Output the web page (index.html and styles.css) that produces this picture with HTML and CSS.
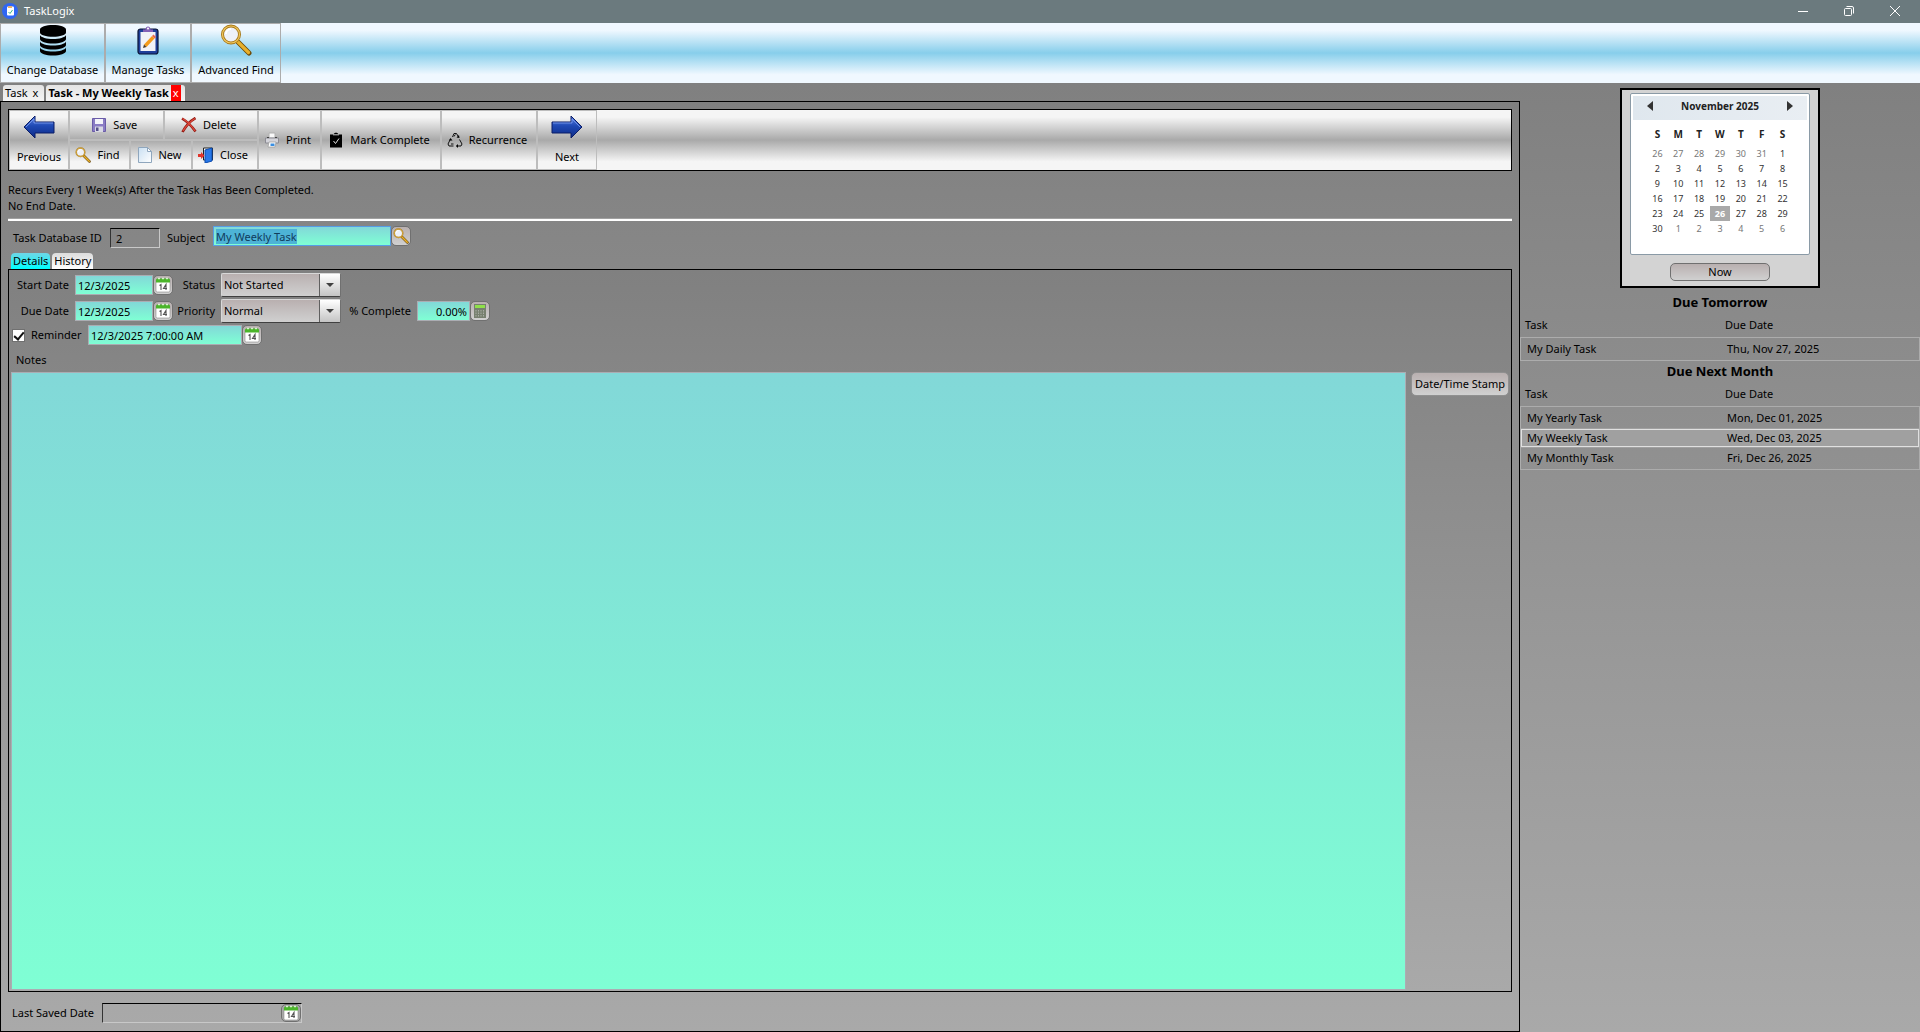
FILE: index.html
```html
<!DOCTYPE html>
<html lang="en">
<head>
<meta charset="utf-8">
<title>TaskLogix</title>
<link rel="stylesheet" href="styles.css">
</head>
<body>
<svg class="defs" aria-hidden="true">
  <defs>
    <linearGradient id="g-blue" x1="0" y1="0" x2="0" y2="1"><stop offset="0" stop-color="#5b82e6"/><stop offset=".45" stop-color="#1f49b4"/><stop offset="1" stop-color="#0d2a86"/></linearGradient>
    <linearGradient id="g-page" x1="0" y1="0" x2="1" y2="1"><stop offset="0" stop-color="#c9dff2"/><stop offset="1" stop-color="#ffffff"/></linearGradient>
    <symbol id="i-search" viewBox="0 0 32 32">
      <path d="M18 18l11 11" stroke="#6d4a08" stroke-width="5" stroke-linecap="round"/>
      <path d="M17 17l11.500 11.500" stroke="#e8b02c" stroke-width="3.200" stroke-linecap="round"/>
      <circle cx="11" cy="10.500" r="8.500" fill="#eef1f8" stroke="#a87818" stroke-width="3"/>
      <circle cx="11" cy="10.500" r="8.500" fill="none" stroke="#f0c860" stroke-width="1.200"/>
      <path d="M6 10a5 5 0 0 1 5-5" stroke="#fff" stroke-width="2" fill="none"/>
    </symbol>
    <symbol id="i-calendar" viewBox="0 0 16 16">
      <rect x="1" y="2" width="14" height="13" rx="1.500" fill="#fff" stroke="#8a8a8a" stroke-width=".6"/>
      <path d="M1 5.500V3a1.500 1.500 0 0 1 1.500-1.500h11A1.500 1.500 0 0 1 15 3v2.500z" fill="#4bb52a"/>
      <path d="M3 1.500h2M7 1.500h2M11 1.500h2" stroke="#d9f2cf" stroke-width="1.500"/>
      <path d="M4.500 8.500L6 7.500V13M11 13V7.500L8.500 11.500H12" stroke="#555" stroke-width="1.100" fill="none"/>
    </symbol>
  </defs>
</svg>

<header class="titlebar">
  <svg class="app-icon" viewBox="0 0 16 16"><circle cx="8" cy="8" r="8" fill="#2f66f2"/><rect x="5" y="3.500" width="7" height="9" rx="1" fill="#fff"/><path d="M6 3h4v2H6z" fill="#e8b070"/><path d="M6.500 9l1.500 1.500L10.500 7" stroke="#35b58a" fill="none"/></svg>
  <h1 class="app-name">TaskLogix</h1>
  <div class="window-buttons">
    <button class="window-button" aria-label="Minimize"><svg viewBox="0 0 10 10"><path d="M0 5.500h10"/></svg></button>
    <button class="window-button" aria-label="Restore"><svg viewBox="0 0 10 10"><rect x=".5" y="2.500" width="7" height="7" rx="1"/><path d="M2.500.5H8A1.500 1.500 0 0 1 9.500 2v5.500"/></svg></button>
    <button class="window-button" aria-label="Close"><svg viewBox="0 0 10 10"><path d="M0 0l10 10M10 0L0 10"/></svg></button>
  </div>
</header>

<nav class="ribbon" aria-label="Main">
  <button class="ribbon-button w-db">
    <svg class="icon-32" viewBox="0 0 32 32"><path d="M3 5.500C3 3 9 1 16 1s13 2 13 4.500v3C29 11 23 12.800 16 12.800S3 11 3 8.500zM3 11c1 2.500 6.500 4 13 4s12-1.500 13-4v4c0 2.500-6 4.500-13 4.500S3 17.500 3 15zM3 17.500c1 2.500 6.500 4 13 4s12-1.500 13-4v3.500c0 2.500-6 4.500-13 4.500S3 23.500 3 21zM3 23.500c1 2.500 6.500 4 13 4s12-1.500 13-4V27c0 2.500-6 4.500-13 4.500S3 29.500 3 27z"/></svg>
    <span>Change Database</span>
  </button>
  <button class="ribbon-button w-tasks">
    <svg class="icon-32" viewBox="0 0 32 32"><rect x="6" y="5" width="20" height="25" rx="2.500" fill="#1f3f9a" stroke="#0a1436" stroke-width="1.200"/><rect x="8.500" y="8" width="15" height="19" fill="#f2f2f7"/><path d="M11 8V5.500h2.500C13.500 1.500 18.500 1.500 18.500 5.500H21V8z" fill="#8561b5"/><circle cx="16" cy="4.600" r="1" fill="#fff"/><path d="M12 20.500l8-8.500 2.500 2.500-8 8.500z" fill="#f49a1a"/><path d="M12 20.500L11 24l3.500-1z" fill="#4a3a28"/><path d="M20 12l1.500-1.500 2.500 2.500-1.500 1.500z" fill="#e86a50"/></svg>
    <span>Manage Tasks</span>
  </button>
  <button class="ribbon-button w-find">
    <svg class="icon-32"><use href="#i-search"/></svg>
    <span>Advanced Find</span>
  </button>
</nav>

<div class="workspace">
  <main class="document">
    <div class="doc-tabs">
      <div class="doc-tab"><button class="tab-label">Task</button><button class="tab-close" aria-label="Close Task">x</button></div>
      <div class="doc-tab doc-tab-active"><button class="tab-label">Task - My Weekly Task</button><button class="tab-close" aria-label="Close My Weekly Task">x</button></div>
    </div>

    <section class="doc-body">
      <div class="toolbar">
        <button class="tool tool-tall w-prev">
          <svg class="arrow" viewBox="0 0 32 24"><path d="M1 12L12 1v6h19v11H12v5z" fill="url(#g-blue)" stroke="#0a1c66"/><path d="M3 12l8-8v4h19" fill="none" stroke="#7fa0f0" stroke-width=".8"/></svg>
          <span>Previous</span>
        </button>
        <div class="tool-stack">
          <div class="tool-row">
            <button class="tool tool-half"><svg class="icon-16" viewBox="0 0 16 16"><path d="M1.500 1.500h13v13h-13z" fill="#8a7cc4" stroke="#6a5ca8"/><path d="M4 2h8v5H4z" fill="#f4f4fa"/><path d="M4 9.500h8V15H4z" fill="#d8d8e4"/><path d="M5 10.500h2.500V14H5z" fill="#55508a"/></svg>Save</button>
            <button class="tool tool-half"><svg class="icon-16" viewBox="0 0 16 16"><path d="M1 1.500c5 3 10 8 13.500 13M14.500 1C9 4 4.500 9.500 1.500 15" stroke="#8e1a12" stroke-width="2.600" fill="none"/><path d="M1.500 1.500c5 3 9 7 12.500 12.500M14 1.500C9 4.500 5 9 2 14" stroke="#e0483c" stroke-width="1.300" fill="none"/></svg>Delete</button>
          </div>
          <div class="tool-row">
            <button class="tool w-find-small"><svg class="icon-16"><use href="#i-search"/></svg>Find</button>
            <button class="tool w-new"><svg class="icon-16" viewBox="0 0 16 16"><path d="M1.500.5h9l4 4v11h-13z" fill="url(#g-page)" stroke="#8fa6bd"/><path d="M10.500.5v4h4z" fill="#fff" stroke="#8fa6bd"/></svg>New</button>
            <button class="tool w-close"><svg class="icon-16" viewBox="0 0 16 16"><path d="M5.500 1h9v12h-9z" fill="#fff" stroke="#222"/><path d="M7 3l7-2v13l-7 2z" fill="#2878e8" stroke="#0d4cb0"/><path d="M0 7h3V5l3.500 3.500L3 12v-2H0z" fill="#e0342c"/></svg>Close</button>
          </div>
        </div>
        <button class="tool w-print"><svg class="icon-16" viewBox="0 0 16 16"><path d="M5 1h6v5H5z" fill="#fafafa" stroke="#b0b0b0"/><path d="M1.500 6h13v5h-13z" fill="#d4d4da" stroke="#8c8c94"/><path d="M3 5.500h2M11 5.500h2" stroke="#444"/><path d="M5 10h7l-1 5H4z" fill="#fff" stroke="#999" stroke-width=".7"/><path d="M6.500 11.500h4v2.500h-4z" fill="#3a8ee0"/></svg>Print</button>
        <button class="tool w-mark"><svg class="icon-16" viewBox="0 0 16 16"><path d="M2 2.500h3.500C6 0 10 0 10.500 2.500H14V15.500H2z"/><path d="M5 2.800h6" stroke="#ccc"/><path d="M5.500 9l2 2.500 3.500-5" stroke="#ddd" fill="none"/></svg>Mark Complete</button>
        <button class="tool w-recur"><svg class="icon-16" viewBox="0 0 16 16"><path d="M5.500 5L7 1.500h2.500L11.500 5M12.500 7.500L15 12l-1 2H9.500M6.500 14H2l-1-2 2.500-5M4 12h2.500M7 4.500L8.300 2.500" fill="none" stroke="#111" stroke-width="1"/><path d="M12.500 6l-3-.5L12 3zM9 14l2-2v4zM3.500 6l2 2.500H2z"/></svg>Recurrence</button>
        <button class="tool tool-tall w-next">
          <svg class="arrow" viewBox="0 0 32 24"><path d="M31 12L20 1v6H1v11h19v5z" fill="url(#g-blue)" stroke="#0a1c66"/><path d="M2 8h19V4l8 8" fill="none" stroke="#7fa0f0" stroke-width=".8"/></svg>
          <span>Next</span>
        </button>
      </div>

      <div class="recurrence-text"><p>Recurs Every 1 Week(s) After the Task Has Been Completed.</p><p>No End Date.</p></div>
      <hr class="rule">

      <form class="form">
        <div class="head-row">
          <label class="id-label" for="task-id">Task Database ID</label>
          <input class="field-readonly task-id" id="task-id" value="2" readonly>
          <label class="subject-label" for="subject">Subject</label>
          <div class="with-button">
            <input class="field subject" id="subject" value="My Weekly Task" autofocus>
            <button class="pick" type="button" aria-label="Look up subject"><svg class="icon-16"><use href="#i-search"/></svg></button>
          </div>
        </div>

        <div class="sub-tabs">
          <button class="sub-tab sub-tab-active" type="button">Details</button>
          <button class="sub-tab" type="button">History</button>
        </div>

        <div class="details">
          <div class="details-fields">
            <label for="start">Start Date</label>
            <div class="with-button"><input class="field date" id="start" value="12/3/2025"><button class="pick" type="button" aria-label="Choose start date"><svg class="icon-16"><use href="#i-calendar"/></svg></button></div>
            <label for="status">Status</label>
            <div class="combo"><select id="status"><option>Not Started</option></select><span class="combo-arrow"></span></div>
            <span></span><span></span>

            <label for="due">Due Date</label>
            <div class="with-button"><input class="field date" id="due" value="12/3/2025"><button class="pick" type="button" aria-label="Choose due date"><svg class="icon-16"><use href="#i-calendar"/></svg></button></div>
            <label for="priority">Priority</label>
            <div class="combo"><select id="priority"><option>Normal</option></select><span class="combo-arrow"></span></div>
            <label for="percent">% Complete</label>
            <div class="with-button"><input class="field percent" id="percent" value="0.00%"><button class="pick" type="button" aria-label="Calculator"><svg class="icon-16" viewBox="0 0 16 16"><rect x="2" y="1" width="12" height="14" fill="#77806f"/><rect x="3" y="2" width="10" height="3" fill="#8fe04a"/><path d="M4 7v7M6.500 7v7M9 7v7M11.500 7v7" stroke="#a8aca4" stroke-dasharray="1.500 1"/></svg></button></div>
          </div>
          <div class="reminder-row">
            <input class="check" type="checkbox" id="reminder" checked>
            <label class="reminder-label" for="reminder">Reminder</label>
            <div class="with-button"><input class="field datetime" aria-label="Reminder date and time" value="12/3/2025 7:00:00 AM"><button class="pick" type="button" aria-label="Choose reminder date"><svg class="icon-16"><use href="#i-calendar"/></svg></button></div>
          </div>
          <label class="notes-label" for="notes">Notes</label>
          <div class="notes-row">
            <textarea class="notes" id="notes"></textarea>
            <button class="stamp" type="button">Date/Time Stamp</button>
          </div>
        </div>

        <div class="saved-row">
          <label class="saved-label" for="saved">Last Saved Date</label>
          <div class="saved-group field-readonly">
            <input class="saved" id="saved" readonly>
            <button class="pick pick-flat" type="button" aria-label="Show saved date"><svg class="icon-16"><use href="#i-calendar"/></svg></button>
          </div>
        </div>
      </form>
    </section>
  </main>

  <aside class="sidebar">
    <section class="calendar-box">
      <div class="calendar">
        <div class="calendar-head">
          <button class="month-step" aria-label="Previous month"><svg viewBox="0 0 6 10"><path d="M6 0v10L0 5z"/></svg></button>
          <strong>November 2025</strong>
          <button class="month-step" aria-label="Next month"><svg viewBox="0 0 6 10"><path d="M0 0v10l6-5z"/></svg></button>
        </div>
        <table class="days">
          <thead><tr><th>S</th><th>M</th><th>T</th><th>W</th><th>T</th><th>F</th><th>S</th></tr></thead>
          <tbody>
            <tr><td class="other">26</td><td class="other">27</td><td class="other">28</td><td class="other">29</td><td class="other">30</td><td class="other">31</td><td>1</td></tr>
            <tr><td>2</td><td>3</td><td>4</td><td>5</td><td>6</td><td>7</td><td>8</td></tr>
            <tr><td>9</td><td>10</td><td>11</td><td>12</td><td>13</td><td>14</td><td>15</td></tr>
            <tr><td>16</td><td>17</td><td>18</td><td>19</td><td>20</td><td>21</td><td>22</td></tr>
            <tr><td>23</td><td>24</td><td>25</td><td class="today">26</td><td>27</td><td>28</td><td>29</td></tr>
            <tr><td>30</td><td class="other">1</td><td class="other">2</td><td class="other">3</td><td class="other">4</td><td class="other">5</td><td class="other">6</td></tr>
          </tbody>
        </table>
      </div>
      <button class="now">Now</button>
    </section>

    <h2 class="list-title">Due Tomorrow</h2>
    <table class="due">
      <thead><tr><th>Task</th><th>Due Date</th></tr></thead>
      <tbody><tr><td>My Daily Task</td><td>Thu, Nov 27, 2025</td></tr></tbody>
    </table>
    <h2 class="list-title">Due Next Month</h2>
    <table class="due">
      <thead><tr><th>Task</th><th>Due Date</th></tr></thead>
      <tbody>
        <tr><td>My Yearly Task</td><td>Mon, Dec 01, 2025</td></tr>
        <tr class="selected"><td>My Weekly Task</td><td>Wed, Dec 03, 2025</td></tr>
        <tr><td>My Monthly Task</td><td>Fri, Dec 26, 2025</td></tr>
      </tbody>
    </table>
  </aside>
</div>
<script src="app.js"></script>
</body>
</html>
```
FILE: styles.css
```css
* { box-sizing: border-box; }

:root {
  --line: #acacac;
  --aqua: linear-gradient(#82d8d8, #7fffd4);
  --button: linear-gradient(#b9b0b0, #d0d0d0);
}

body {
  margin: 0;
  min-height: 100vh;
  display: flex;
  flex-direction: column;
  font: 11px/16px "Noto Sans", "Open Sans", sans-serif;
  color: #000;
}

button, input, select, textarea {
  font: inherit;
  color: inherit;
  margin: 0;
  padding: 0;
  border: 0;
  border-radius: 0;
  background: none;
  outline: 0;
}

button, label { white-space: nowrap; }
svg { display: block; flex: none; }
.defs { position: absolute; width: 0; height: 0; }
.icon-16 { width: 16px; height: 16px; }
.icon-32 { width: 32px; height: 32px; }

/* Title bar */
.titlebar {
  display: flex;
  align-items: center;
  height: 23px;
  padding: 0 2px 1px;
  background: #6b7a7e;
  color: #fff;
}
.app-icon { width: 16px; height: 16px; }
.app-name { flex: 1; margin: 0 0 0 6px; font-size: 11px; font-weight: 400; }
.window-buttons { display: flex; }
.window-button { width: 46px; height: 20px; display: grid; place-items: center; }
.window-button svg { width: 10px; height: 10px; fill: none; stroke: #fff; overflow: visible; }

/* Ribbon */
.ribbon {
  display: flex;
  height: 60px;
  background: linear-gradient(#f0f8ff 12%, #87ceeb 50%, #f0f8ff 86%);
}
.ribbon-button {
  display: flex;
  flex-direction: column;
  align-items: center;
  justify-content: flex-start;
  gap: 6px;
  border: 1px solid var(--line);
}
.w-db { width: 105px; }
.w-tasks { width: 86px; }
.w-find { width: 90px; }

/* Workspace */
.workspace {
  flex: 1;
  display: grid;
  grid-template-columns: minmax(0, 1fr) 400px;
  background: linear-gradient(#808080, #a9a9a9);
}
.document { display: flex; flex-direction: column; min-width: 0; }
.doc-tabs { display: flex; gap: 2px; padding: 2px 3px 0; }
.doc-tab {
  display: flex;
  height: 16px;
  padding: 0 4px 0 2px;
  border-radius: 3px 3px 0 0;
  background: linear-gradient(#e4e4e4, #f4f4f4);
  line-height: 16px;
}
.tab-close { padding: 0 2px; }
.doc-tab .tab-label { margin-right: 3px; }
.doc-tab-active { font-weight: 700; }
.doc-tab-active .tab-label { margin-right: 2px; }
.doc-tab-active .tab-close { background: #f00; color: #fff; font-weight: 400; }

.doc-body {
  flex: 1;
  display: flex;
  flex-direction: column;
  padding: 7px;
  border: 1px solid #000;
  background: linear-gradient(#808080, #a9a9a9);
}

/* Task toolbar */
.toolbar {
  display: flex;
  height: 62px;
  border: 1px solid #000;
  background: linear-gradient(#f5f5f5 12%, #a9a9a9 50%, #f5f5f5 86%);
}
.tool {
  display: flex;
  align-items: center;
  justify-content: center;
  gap: 6px;
  padding-right: 4px;
  border: 1px solid #bdbdbd;
}
.tool-tall { flex-direction: column; gap: 10px; padding: 0; }
.arrow { width: 32px; height: 24px; }
.tool-stack { display: flex; flex-direction: column; width: 189px; }
.tool-row { display: flex; flex: 1; }
.tool-half { flex: 1; }
.w-prev { width: 60px; }
.w-find-small { width: 61px; }
.w-new { width: 62px; }
.w-close { flex: 1; }
.w-print { width: 63px; }
.w-mark { width: 120px; }
.w-recur { width: 96px; }
.w-next { width: 60px; }

.recurrence-text { padding: 11px 0 4px; }
.recurrence-text p { margin: 0; }
.rule { width: 100%; height: 3px; margin: 0; border: 0; border-top: 1px solid #a0a0a0; background: #fff; }

/* Form */
.form { flex: 1; display: flex; flex-direction: column; }
.head-row { display: flex; align-items: flex-start; gap: 7px; padding: 5px 0 0 5px; height: 32px; }
.head-row label { padding-top: 4px; }
.id-label { width: 90px; }
.subject-label { width: 39px; }
.field-readonly {
  height: 20px;
  border: 1px solid;
  border-color: #000 #c8c8c8 #c8c8c8 #333;
}
.task-id { width: 50px; margin-top: 2px; padding-left: 5px; }
.with-button { display: flex; }
.field {
  height: 20px;
  padding: 0 2px;
  border: 1px solid #abadb3;
  background: var(--aqua);
}
.subject { width: 178px; border-color: #569de5; }
.subject::selection { background: #4db3d6; color: #103c5c; }
.pick {
  display: grid;
  place-items: center;
  width: 20px;
  height: 20px;
  border: 1px solid #707070;
  border-radius: 5px;
  background: var(--button);
}
.date { width: 78px; }
.datetime { width: 154px; }
.percent { width: 53px; text-align: right; }

.sub-tabs { display: flex; gap: 2px; padding-left: 3px; height: 16px; }
.sub-tab { padding: 0 2px; border-radius: 4px 4px 0 0; background: linear-gradient(#dcdcdc, #fff); }
.sub-tab-active { background: linear-gradient(#6fd6e6, #0ff); }

.details {
  flex: 1;
  display: flex;
  flex-direction: column;
  padding: 3px 2px 1px;
  border: 1px solid #000;
  background: linear-gradient(#808080, #a9a9a9);
}
.details-fields {
  display: grid;
  grid-template-columns: 58px 98px 36px 120px 64px auto;
  column-gap: 6px;
  row-gap: 2px;
  justify-content: start;
  align-items: center;
}
.details-fields label { display: flex; justify-content: flex-end; }
.combo {
  position: relative;
  height: 24px;
  border: 1px solid;
  border-color: #d8d8d8 #707070 #404040 #d8d8d8;
  border-radius: 2px;
  background: linear-gradient(#b9b0b0, #d0d0d0);
}
.combo select { appearance: none; width: 100%; height: 22px; padding: 0 24px 0 2px; }
.combo-arrow {
  position: absolute;
  top: 0;
  right: 0;
  bottom: 0;
  width: 21px;
  display: grid;
  place-items: center;
  border-left: 1px solid #606060;
  background: linear-gradient(#fff, #c4c4c4);
  pointer-events: none;
}
.combo-arrow::after {
  content: "";
  border: 4px solid transparent;
  border-top-color: #404040;
  border-bottom: 0;
}
.reminder-row { display: flex; align-items: center; gap: 6px; padding: 2px 0 0 1px; }
.reminder-label { width: 51px; }
.check { appearance: none; width: 13px; height: 13px; border: 1px solid #707070; background: #fff; display: grid; place-items: center; }
.check:checked::after {
  content: "";
  width: 4px;
  height: 8px;
  margin-bottom: 2px;
  border: solid #111;
  border-width: 0 2px 2px 0;
  transform: rotate(40deg);
}
.notes-label { padding: 7px 5px 4px; }
.notes-row { flex: 1; display: flex; align-items: flex-start; gap: 5px; }
.notes {
  flex: 1;
  align-self: stretch;
  resize: none;
  border: 1px solid #abadb3;
  background: var(--aqua);
}
.stamp {
  width: 98px;
  height: 24px;
  border: 1px solid #909090;
  border-radius: 5px;
  background: var(--button);
}

.saved-row { display: flex; align-items: center; gap: 7px; padding: 11px 0 1px 4px; }
.saved-label { width: 83px; }
.saved-group { display: flex; align-items: center; width: 200px; }
.saved { flex: 1; min-width: 0; height: 18px; }
.pick-flat { height: 18px; background: none; }

/* Sidebar */
.sidebar { padding-top: 5px; }
.calendar-box {
  width: 200px;
  height: 200px;
  margin: 0 auto 4px;
  padding: 3px 8px;
  border: 2px solid #000;
  background: #d3d3d3;
}
.calendar {
  height: 162px;
  padding: 2px;
  border: 1px solid #8a9aa6;
  border-radius: 2px;
  background: #fff;
}
.calendar-head {
  display: flex;
  align-items: center;
  justify-content: space-between;
  height: 24px;
  padding: 0 14px 4px;
  background: linear-gradient(90deg, #dfe7ee, #e9eef3);
  color: #222;
  font-size: 10px;
}
.month-step svg { width: 6px; height: 10px; fill: #333; }
.days {
  width: 146px;
  margin: 2px auto 0;
  border-collapse: collapse;
  table-layout: fixed;
  text-align: center;
  font-size: 9px;
  line-height: 15px;
  color: #333;
}
.days th, .days td { padding: 0; }
.days th { height: 24px; color: #222; font-size: 10px; }
.other { color: #777; }
.days .today { background: #a9a9a9; color: #fff; font-weight: 700; }
.now {
  display: block;
  width: 100px;
  height: 18px;
  margin: 8px auto 0;
  border: 1px solid #707070;
  border-radius: 5px;
  background: var(--button);
  line-height: 16px;
}
.list-title { margin: 0; font-size: 13px; line-height: 21px; text-align: center; }
.due { width: 100%; border-collapse: separate; border-spacing: 0; table-layout: fixed; }
.due th, .due td { padding: 0 5px; text-align: left; font-weight: 400; }
.due th { height: 24px; }
.due td { padding: 2px 7px; }
.due tbody { outline: 1px solid var(--line); outline-offset: -1px; }
.due tbody tr:first-child td { padding-top: 4px; }
.due tbody tr:last-child td { padding-bottom: 4px; }
.due .selected { background: #a0a0a0; outline: 1px solid #e0e0e0; outline-offset: -2px; }
```
FILE: app.js
```js
const subject = document.getElementById("subject");
subject.focus();
subject.select();
```
